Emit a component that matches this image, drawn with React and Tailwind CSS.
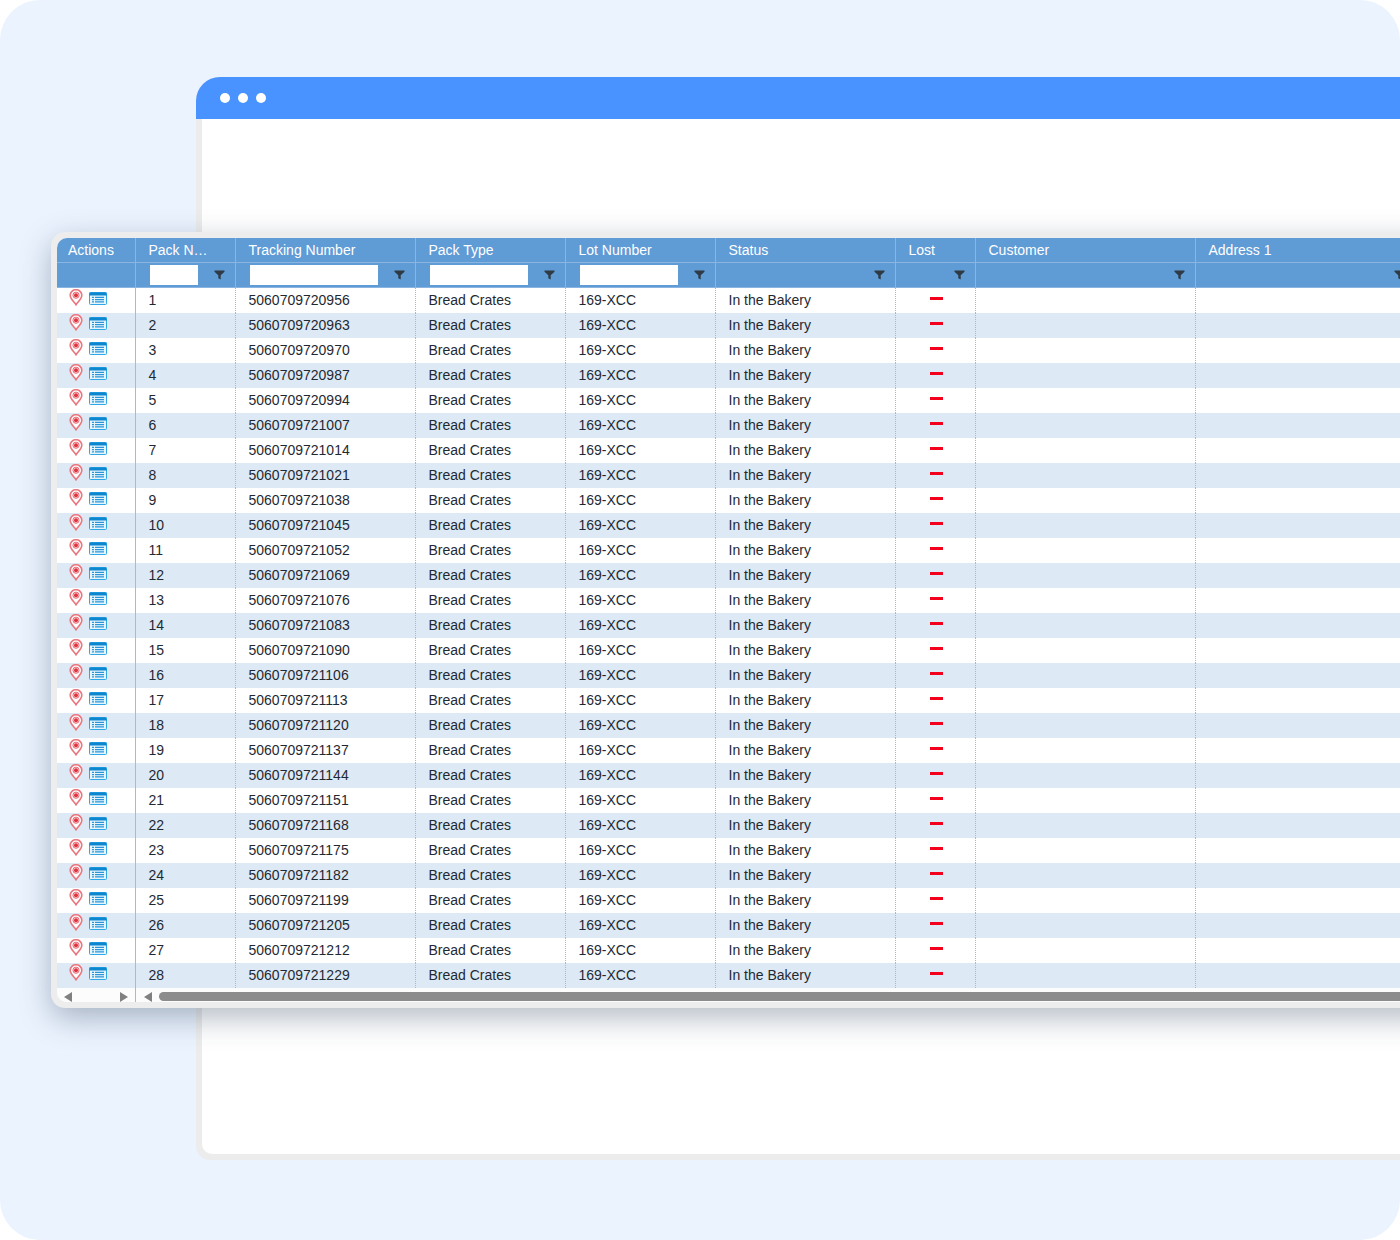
const columns = [
  { label: "Pack N…", width: "w-[100px]", input: "w-[48px]" },
  { label: "Tracking Number", width: "w-[180px]", input: "w-[128px]" },
  { label: "Pack Type", width: "w-[150px]", input: "w-[98px]" },
  { label: "Lot Number", width: "w-[150px]", input: "w-[98px]" },
  { label: "Status", width: "w-[180px]" },
  { label: "Lost", width: "w-[80px]" },
  { label: "Customer", width: "w-[220px]" },
  { label: "Address 1", width: "w-[220px]" },
];

const codes = ["0956","0963","0970","0987","0994","1007","1014","1021","1038","1045","1052","1069","1076","1083","1090","1106","1113","1120","1137","1144","1151","1168","1175","1182","1199","1205","1212","1229"];

function Funnel() {
  return (
    <svg width="11" height="10" viewBox="0 0 11 10" className="absolute right-[10px] top-[7px]">
      <path d="M0.5 0.5H10.5V1.8L6.7 5.3V9.5L4.3 8.3V5.3L0.5 1.8Z" fill="#2f3a44" />
    </svg>
  );
}

function Pin() {
  return (
    <svg width="14" height="17" viewBox="0 0 14 17" className="shrink-0">
      <path d="M7 15.8C5 12.8 1.2 9.8 1.2 6.3A5.8 5.6 0 0 1 12.8 6.3C12.8 9.8 9 12.8 7 15.8Z" fill="#fff" stroke="#e9777f" strokeWidth="1.6" />
      <circle cx="7" cy="6.2" r="3.1" fill="#fbdcde" stroke="#ea6a74" strokeWidth="1" />
      <circle cx="7" cy="6.2" r="2" fill="#e2323f" />
    </svg>
  );
}

function ListIcon() {
  return (
    <svg width="18" height="13" viewBox="0 0 18 13" className="shrink-0">
      <rect x="0.5" y="0.5" width="17" height="12" rx="1" fill="#e6f4fc" stroke="#2fa6e6" />
      <rect x="0.5" y="0.5" width="17" height="3" fill="#0b86cf" />
      <path d="M3 5.3H5M6 5.3H15M3 7.6H5M6 7.6H15M3 9.9H5M6 9.9H15" stroke="#2a96d8" strokeWidth="1.2" />
    </svg>
  );
}

function Triangle({ dir }) {
  return (
    <svg width="8" height="10" viewBox="0 0 8 10" className="shrink-0">
      <path d={dir === "left" ? "M8 0V10L0 5Z" : "M0 0V10L8 5Z"} fill="#808080" />
    </svg>
  );
}

function Row({ n, code, alt }) {
  const cell = "shrink-0 h-full border-r border-dotted border-[#9dbbdd] flex items-center";
  const text = `${cell} pl-[12.5px] pb-[1px]`;
  return (
    <div className={`flex h-[25px] ${alt ? "bg-[#dde9f5]" : "bg-white"}`}>
      <div className="w-[79px] shrink-0 h-full border-r border-[#9dbde0] flex items-start gap-[6px] pl-[12px] pt-[1px]">
        <Pin />
        <div className="pt-[3px]"><ListIcon /></div>
      </div>
      <div className={`w-[100px] ${text}`}>{n}</div>
      <div className={`w-[180px] ${text}`}>506070972{code}</div>
      <div className={`w-[150px] ${text}`}>Bread Crates</div>
      <div className={`w-[150px] ${text}`}>169-XCC</div>
      <div className={`w-[180px] ${text}`}>In the Bakery</div>
      <div className={`w-[80px] ${cell} justify-center`}>
        <div className="w-[13px] h-[3px] bg-[#f5001c] -mt-[4px] ml-[2px]" />
      </div>
      <div className={`w-[220px] ${cell}`} />
      <div className={`w-[220px] ${cell}`} />
    </div>
  );
}

export default function App() {
  return (
    <div className="relative w-[1400px] h-[1240px] bg-white overflow-hidden font-['Liberation_Sans',Arial,sans-serif]">
      <div className="relative w-full h-full rounded-[40px] bg-[#ebf3fe] pl-[196px] pt-[77px] overflow-hidden">
        <div className="w-[1300px] h-[1083px] rounded-t-[24px] rounded-b-[14px] bg-[#ececec] flex flex-col overflow-hidden">
          <div className="h-[42px] shrink-0 bg-[#4893ff] flex items-center gap-[8px] pl-[24px]">
            <span className="w-[10px] h-[10px] rounded-full bg-white" />
            <span className="w-[10px] h-[10px] rounded-full bg-white" />
            <span className="w-[10px] h-[10px] rounded-full bg-white" />
          </div>
          <div className="flex-1 ml-[6px] mb-[6px] bg-white rounded-bl-[10px]" />
        </div>

        <div className="absolute left-[51px] top-[232px] w-[1420px] h-[776px] bg-[#ededed] p-[6px] rounded-[14px] shadow-[0_10px_30px_rgba(40,60,90,0.35)]">
          <div className="w-full h-full bg-white rounded-l-[10px] overflow-hidden text-[14px] leading-[20px] text-[#1f2933]">
            <div className="flex h-[25px] bg-[#5f9bd5] text-white border-b border-[#8ab5e2]">
              <div className="w-[79px] shrink-0 h-full border-r border-[#8ab5e2] pl-[11px] flex items-center">Actions</div>
              {columns.map((c) => (
                <div key={c.label} className={`${c.width} shrink-0 h-full border-r border-[#8ab5e2] pl-[12.5px] flex items-center`}>{c.label}</div>
              ))}
            </div>
            <div className="flex h-[25px] bg-[#5f9bd5] border-b border-[#8ab5e2]">
              <div className="w-[79px] shrink-0 h-full border-r border-[#8ab5e2]" />
              {columns.map((c) => (
                <div key={c.label} className={`${c.width} relative shrink-0 h-full border-r border-[#8ab5e2] pl-[14px] pt-[2px]`}>
                  {c.input && <div className={`${c.input} h-[20px] bg-white`} />}
                  <Funnel />
                </div>
              ))}
            </div>
            {codes.map((code, i) => (
              <Row key={code} n={i + 1} code={code} alt={i % 2 === 1} />
            ))}
            <div className="flex h-[14px] bg-[#fcfcfc]">
              <div className="w-[79px] shrink-0 h-full border-r border-[#9dbde0] flex items-start justify-between pl-[7px] pr-[7px] pt-[4px]">
                <Triangle dir="left" />
                <Triangle dir="right" />
              </div>
              <div className="flex-1 flex items-start pl-[8px] gap-[7px] pt-[4px]">
                <Triangle dir="left" />
                <div className="flex-1 h-[9px] rounded-l-[5px] bg-[#8c8c8c]" />
              </div>
            </div>
          </div>
        </div>
      </div>
    </div>
  );
}
